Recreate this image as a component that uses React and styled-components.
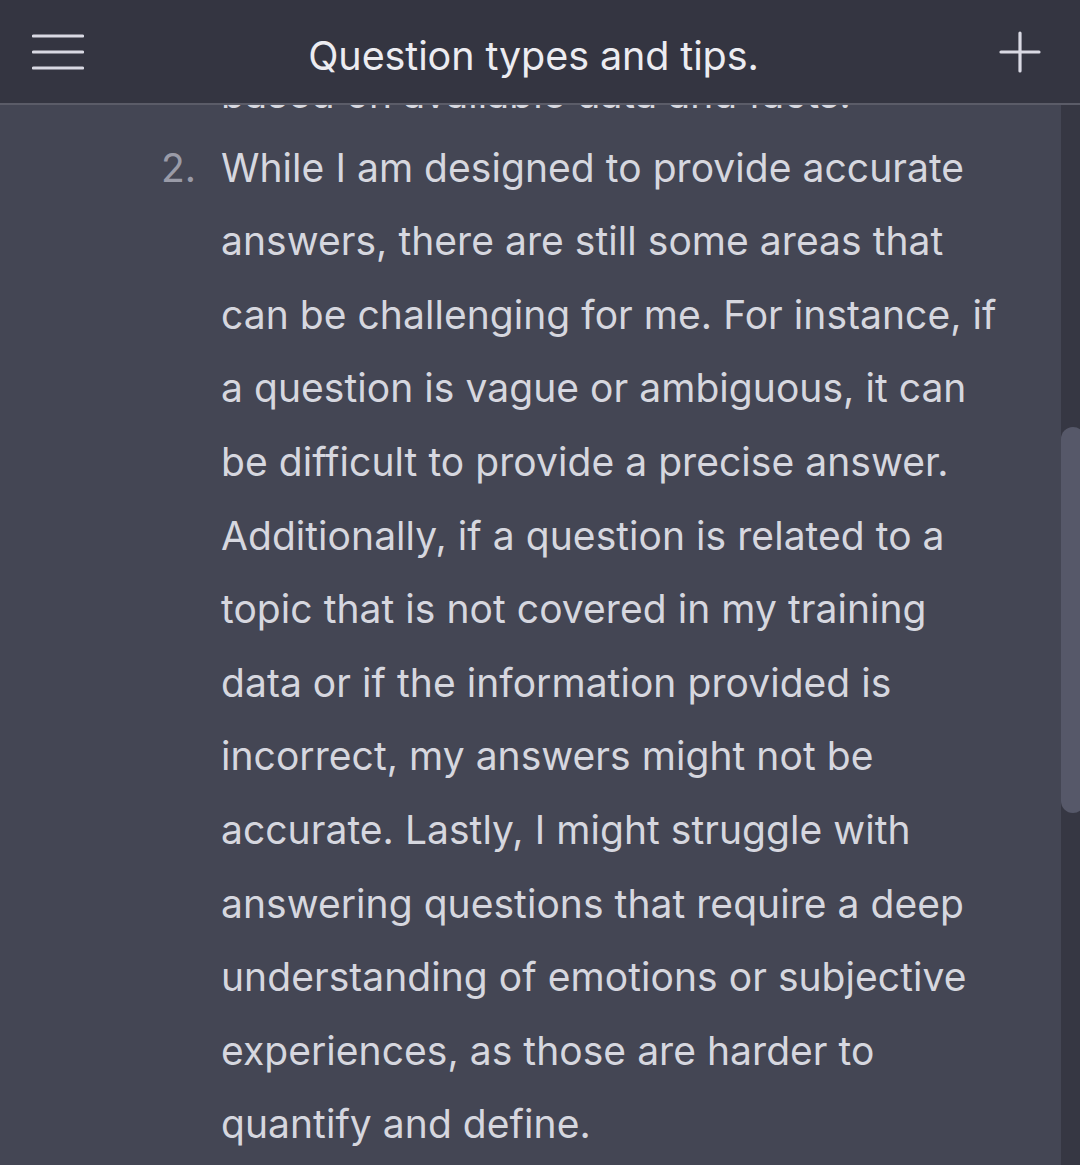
import React from 'react';
import styled, { createGlobalStyle } from 'styled-components';

const GlobalStyle = createGlobalStyle`
  html, body {
    margin: 0;
    padding: 0;
    background: #444654;
  }
  body {
    font-family: Inter, "Noto Sans", sans-serif;
    -webkit-font-smoothing: antialiased;
  }
`;

const Screen = styled.div`
  width: 1080px;
  height: 1165px;
  display: flex;
  flex-direction: column;
  overflow: hidden;
  background: #444654;
`;

const TopBar = styled.header`
  flex: 0 0 auto;
  height: 103px;
  display: flex;
  align-items: center;
  justify-content: space-between;
  padding: 0 39px 0 32px;
  background: #343541;
  border-bottom: 2px solid #5b5c68;
  position: relative;
  z-index: 2;
`;

const IconButton = styled.button`
  padding: 0;
  border: 0;
  background: none;
  color: #d9d9e3;
  display: flex;
  align-items: center;
  justify-content: center;
`;

const Title = styled.h1`
  margin: 8px 16px 0 0;
  font-size: 39.5px;
  font-weight: 400;
  letter-spacing: -0.1px;
  color: #ececf1;
`;

const Body = styled.main`
  flex: 1;
  display: flex;
  min-height: 0;
`;

const Scroller = styled.div`
  flex: 1;
  overflow: hidden;
`;

const List = styled.ol`
  margin: -48px 0 0;
  padding: 0 0 0 221px;
  list-style: none;
`;

const Item = styled.li`
  position: relative;
  font-size: 39px;
  line-height: 73.6px;
  letter-spacing: 0.05px;
  color: #d6d7df;
  white-space: nowrap;
`;

const Marker = styled.span`
  position: absolute;
  left: -60px;
  color: #9a9ba8;
`;

const Track = styled.div`
  flex: 0 0 19px;
  background: #363743;
  padding-top: 322px;
  overflow: hidden;
`;

const Thumb = styled.div`
  width: 24px;
  height: 386px;
  border-radius: 12px;
  background: #565869;
`;

const MenuIcon = () => (
  <svg width="52" height="40" viewBox="0 0 52 40" fill="none" stroke="currentColor" strokeWidth="3.2" strokeLinecap="round">
    <line x1="1.5" y1="4" x2="50.5" y2="4" />
    <line x1="1.5" y1="20" x2="50.5" y2="20" />
    <line x1="1.5" y1="36" x2="50.5" y2="36" />
  </svg>
);

const PlusIcon = () => (
  <svg width="42" height="42" viewBox="0 0 42 42" fill="none" stroke="currentColor" strokeWidth="3.2" strokeLinecap="round">
    <line x1="21" y1="2" x2="21" y2="40" />
    <line x1="2" y1="21" x2="40" y2="21" />
  </svg>
);

const lines = [
  'While I am designed to provide accurate',
  'answers, there are still some areas that',
  'can be challenging for me. For instance, if',
  'a question is vague or ambiguous, it can',
  'be difficult to provide a precise answer.',
  'Additionally, if a question is related to a',
  'topic that is not covered in my training',
  'data or if the information provided is',
  'incorrect, my answers might not be',
  'accurate. Lastly, I might struggle with',
  'answering questions that require a deep',
  'understanding of emotions or subjective',
  'experiences, as those are harder to',
  'quantify and define.',
];

export default function App() {
  return (
    <Screen>
      <GlobalStyle />
      <TopBar>
        <IconButton aria-label="Menu"><MenuIcon /></IconButton>
        <Title>Question types and tips.</Title>
        <IconButton aria-label="New chat"><PlusIcon /></IconButton>
      </TopBar>
      <Body>
        <Scroller>
          <List>
            <Item>based on available data and facts.</Item>
            <Item>
              <Marker>2.</Marker>
              {lines.map((l, i) => (
                <React.Fragment key={i}>
                  {l}
                  {i < lines.length - 1 && <br />}
                </React.Fragment>
              ))}
            </Item>
          </List>
        </Scroller>
        <Track>
          <Thumb />
        </Track>
      </Body>
    </Screen>
  );
}
